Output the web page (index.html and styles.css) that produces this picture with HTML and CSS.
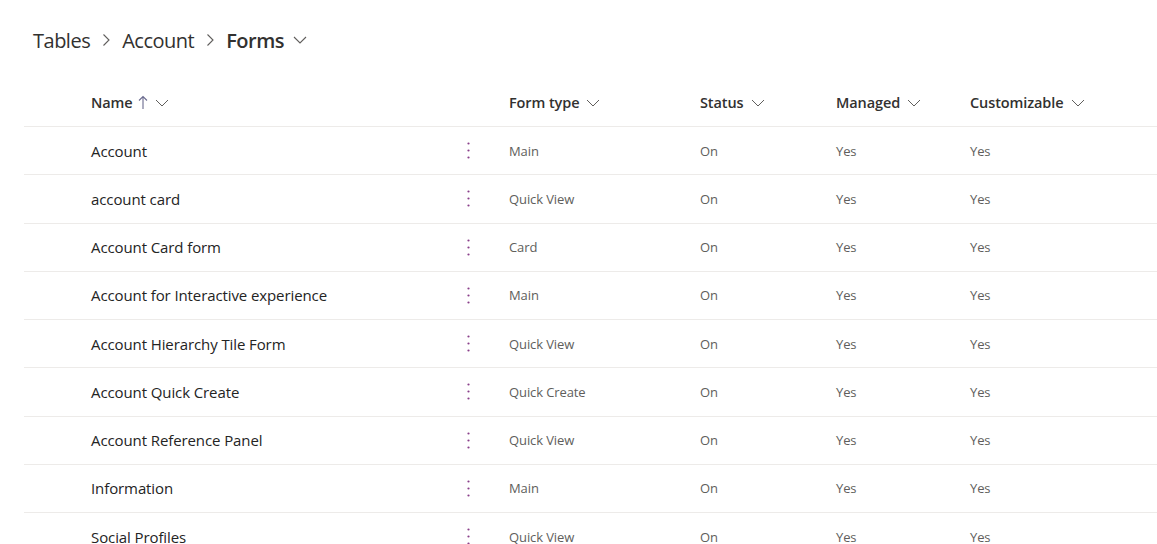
FILE: index.html
```html
<!DOCTYPE html>
<html>
<head>
<meta charset="utf-8">
<link rel="stylesheet" href="styles.css">
</head>
<body>
<nav class="crumbs">
  <span class="crumb">Tables</span>
  <svg class="sep" width="10" height="14" viewBox="0 0 10 14"><path d="M2.5 1.5 L8 7 L2.5 12.5" fill="none" stroke="#605e5c" stroke-width="1.1"/></svg>
  <span class="crumb">Account</span>
  <svg class="sep" width="10" height="14" viewBox="0 0 10 14"><path d="M2.5 1.5 L8 7 L2.5 12.5" fill="none" stroke="#605e5c" stroke-width="1.1"/></svg>
  <span class="crumb current">Forms</span>
  <svg class="drop" width="14" height="8" viewBox="0 0 14 8"><path d="M1 1 L7 7 L13 1" fill="none" stroke="#605e5c" stroke-width="1.1"/></svg>
</nav>

<div class="grid">
  <div class="row head">
    <div class="cell name">Name
      <svg class="sort" width="10" height="15" viewBox="0 0 10 15"><path d="M5 14 V1.5 M1 5.5 L5 1.5 L9 5.5" fill="none" stroke="#6b6b8f" stroke-width="1.1"/></svg>
      <svg class="chev" width="14" height="8" viewBox="0 0 14 8"><path d="M1 1 L7 7 L13 1" fill="none" stroke="#605e5c" stroke-width="1"/></svg>
    </div>
    <div class="cell"></div>
    <div class="cell">Form type <svg class="chev" width="14" height="8" viewBox="0 0 14 8"><path d="M1 1 L7 7 L13 1" fill="none" stroke="#605e5c" stroke-width="1"/></svg></div>
    <div class="cell">Status <svg class="chev" width="14" height="8" viewBox="0 0 14 8"><path d="M1 1 L7 7 L13 1" fill="none" stroke="#605e5c" stroke-width="1"/></svg></div>
    <div class="cell">Managed <svg class="chev" width="14" height="8" viewBox="0 0 14 8"><path d="M1 1 L7 7 L13 1" fill="none" stroke="#605e5c" stroke-width="1"/></svg></div>
    <div class="cell">Customizable <svg class="chev" width="14" height="8" viewBox="0 0 14 8"><path d="M1 1 L7 7 L13 1" fill="none" stroke="#605e5c" stroke-width="1"/></svg></div>
  </div>

  <div class="row"><div class="cell name">Account</div><div class="cell kebab"><svg width="3" height="17" viewBox="0 0 3 17"><circle cx="1.5" cy="1.5" r="1.1"/><circle cx="1.5" cy="8.5" r="1.1"/><circle cx="1.5" cy="15.5" r="1.1"/></svg></div><div class="cell val">Main</div><div class="cell val">On</div><div class="cell val">Yes</div><div class="cell val">Yes</div></div>
  <div class="row"><div class="cell name">account card</div><div class="cell kebab"><svg width="3" height="17" viewBox="0 0 3 17"><circle cx="1.5" cy="1.5" r="1.1"/><circle cx="1.5" cy="8.5" r="1.1"/><circle cx="1.5" cy="15.5" r="1.1"/></svg></div><div class="cell val">Quick View</div><div class="cell val">On</div><div class="cell val">Yes</div><div class="cell val">Yes</div></div>
  <div class="row"><div class="cell name">Account Card form</div><div class="cell kebab"><svg width="3" height="17" viewBox="0 0 3 17"><circle cx="1.5" cy="1.5" r="1.1"/><circle cx="1.5" cy="8.5" r="1.1"/><circle cx="1.5" cy="15.5" r="1.1"/></svg></div><div class="cell val">Card</div><div class="cell val">On</div><div class="cell val">Yes</div><div class="cell val">Yes</div></div>
  <div class="row"><div class="cell name">Account for Interactive experience</div><div class="cell kebab"><svg width="3" height="17" viewBox="0 0 3 17"><circle cx="1.5" cy="1.5" r="1.1"/><circle cx="1.5" cy="8.5" r="1.1"/><circle cx="1.5" cy="15.5" r="1.1"/></svg></div><div class="cell val">Main</div><div class="cell val">On</div><div class="cell val">Yes</div><div class="cell val">Yes</div></div>
  <div class="row"><div class="cell name">Account Hierarchy Tile Form</div><div class="cell kebab"><svg width="3" height="17" viewBox="0 0 3 17"><circle cx="1.5" cy="1.5" r="1.1"/><circle cx="1.5" cy="8.5" r="1.1"/><circle cx="1.5" cy="15.5" r="1.1"/></svg></div><div class="cell val">Quick View</div><div class="cell val">On</div><div class="cell val">Yes</div><div class="cell val">Yes</div></div>
  <div class="row"><div class="cell name">Account Quick Create</div><div class="cell kebab"><svg width="3" height="17" viewBox="0 0 3 17"><circle cx="1.5" cy="1.5" r="1.1"/><circle cx="1.5" cy="8.5" r="1.1"/><circle cx="1.5" cy="15.5" r="1.1"/></svg></div><div class="cell val">Quick Create</div><div class="cell val">On</div><div class="cell val">Yes</div><div class="cell val">Yes</div></div>
  <div class="row"><div class="cell name">Account Reference Panel</div><div class="cell kebab"><svg width="3" height="17" viewBox="0 0 3 17"><circle cx="1.5" cy="1.5" r="1.1"/><circle cx="1.5" cy="8.5" r="1.1"/><circle cx="1.5" cy="15.5" r="1.1"/></svg></div><div class="cell val">Quick View</div><div class="cell val">On</div><div class="cell val">Yes</div><div class="cell val">Yes</div></div>
  <div class="row"><div class="cell name">Information</div><div class="cell kebab"><svg width="3" height="17" viewBox="0 0 3 17"><circle cx="1.5" cy="1.5" r="1.1"/><circle cx="1.5" cy="8.5" r="1.1"/><circle cx="1.5" cy="15.5" r="1.1"/></svg></div><div class="cell val">Main</div><div class="cell val">On</div><div class="cell val">Yes</div><div class="cell val">Yes</div></div>
  <div class="row"><div class="cell name">Social Profiles</div><div class="cell kebab"><svg width="3" height="17" viewBox="0 0 3 17"><circle cx="1.5" cy="1.5" r="1.1"/><circle cx="1.5" cy="8.5" r="1.1"/><circle cx="1.5" cy="15.5" r="1.1"/></svg></div><div class="cell val">Quick View</div><div class="cell val">On</div><div class="cell val">Yes</div><div class="cell val">Yes</div></div>
</div>
</body>
</html>
```

FILE: styles.css
```css
html, body {
  margin: 0;
  padding: 0;
  background: #ffffff;
  overflow: hidden;
}
body {
  font-family: "Segoe UI", "Open Sans", "Noto Sans", sans-serif;
  color: #242424;
  width: 1157px;
  height: 544px;
}
.crumbs {
  display: flex;
  align-items: center;
  height: 28px;
  margin-top: 26px;
  padding-left: 33px;
  font-size: 20px;
  color: #323130;
}
.crumb {
  letter-spacing: -0.5px;
}
.sep {
  margin: 0 11px 0 11px;
}
.current {
  font-weight: 600;
}
.drop {
  margin-left: 9px;
}
.grid {
  margin-top: 25px;
  margin-left: 24px;
}
.row {
  display: grid;
  grid-template-columns: 377px 41px 191px 136px 134px 1fr;
  padding-left: 67px;
  height: 48.25px;
  box-sizing: border-box;
  border-bottom: 1px solid #edebe9;
  align-items: center;
}
.row.head {
  height: 48px;
  font-weight: 600;
  color: #323130;
  font-size: 14.5px;
}
.cell {
  display: flex;
  align-items: center;
  white-space: nowrap;
}
.row .name {
  font-size: 15px;
  letter-spacing: -0.1px;
}
.row.head .name {
  font-size: 14.5px;
}
.row.head .cell {
  letter-spacing: -0.1px;
}
.sort {
  margin-left: 5px;
}
.chev {
  margin-left: 7px;
}
.kebab svg {
  fill: #8a3f8a;
  margin-left: -1px;
}
.val {
  font-size: 13px;
  color: #605e5c;
  letter-spacing: -0.1px;
}
```
